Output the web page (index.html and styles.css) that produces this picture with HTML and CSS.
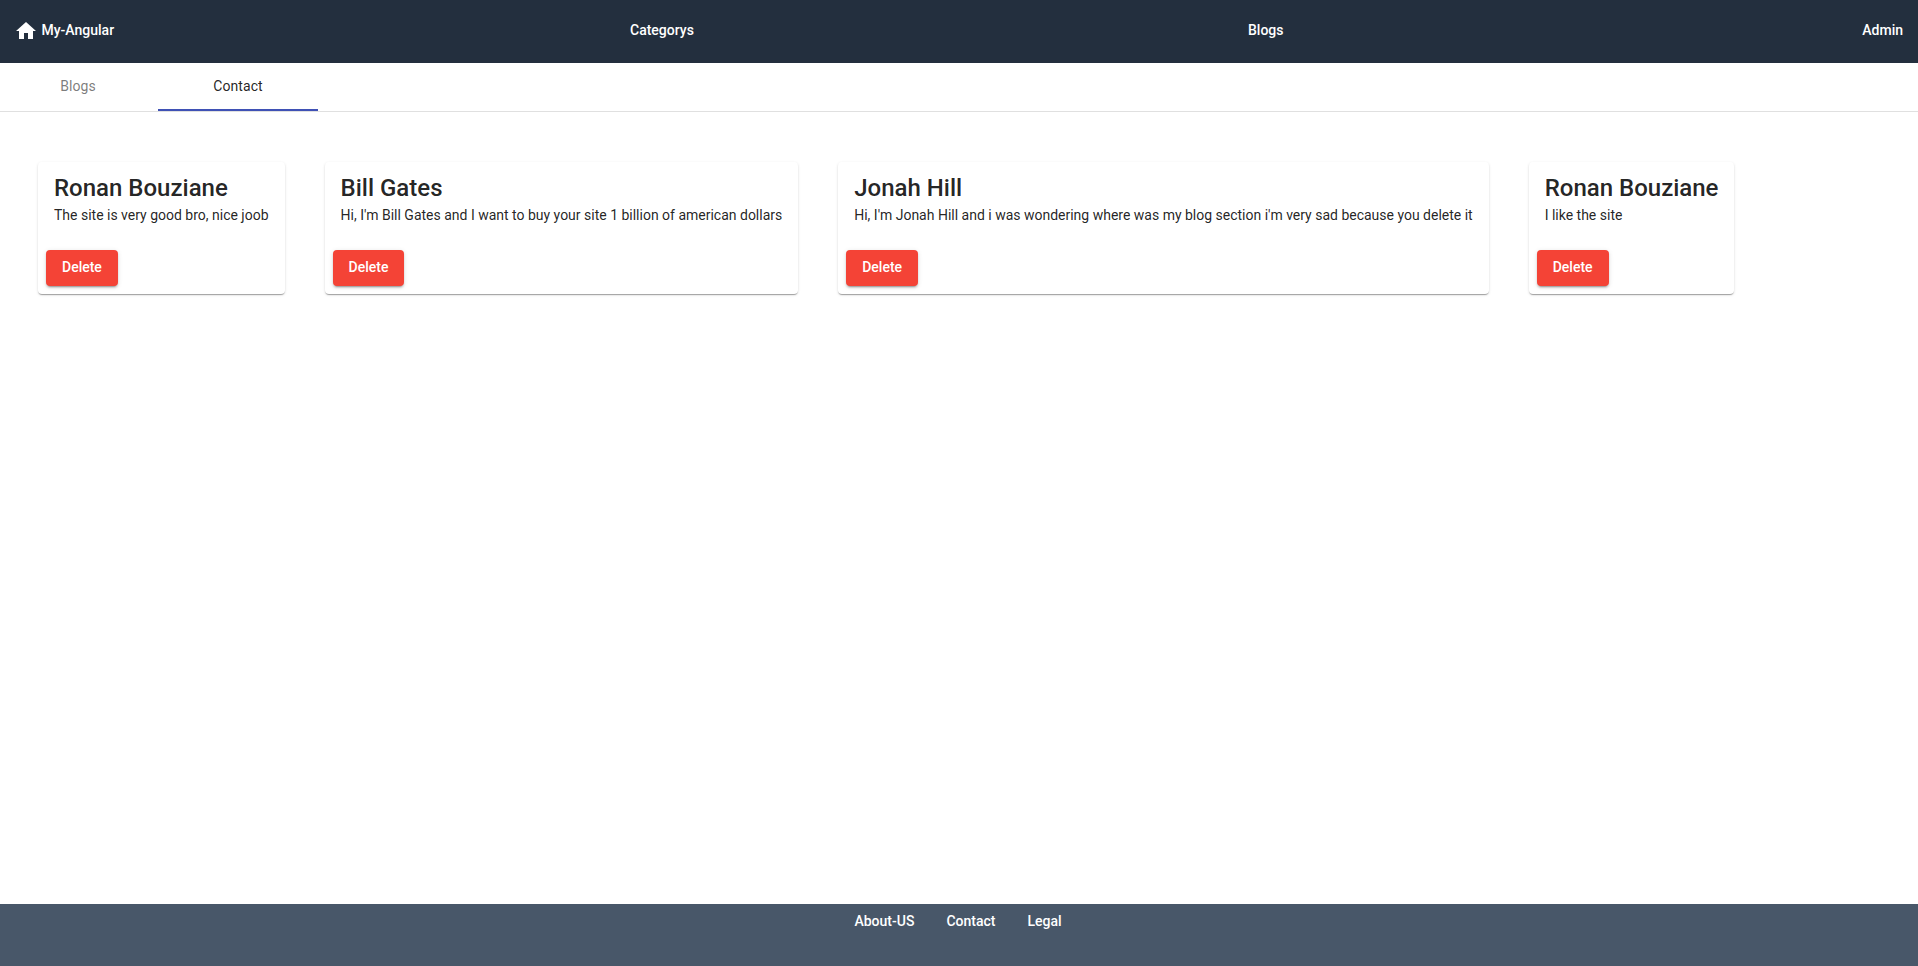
FILE: index.html
```html
<!DOCTYPE html>
<html lang="en">
<head>
<meta charset="utf-8">
<title>My-Angular</title>
<link rel="stylesheet" href="styles.css">
</head>
<body>
<header class="toolbar">
  <a class="brand"><svg class="home" viewBox="0 0 24 24"><path d="M10 20v-6h4v6h5v-8h3L12 3 2 12h3v8z"/></svg><span>My-Angular</span></a>
  <a>Categorys</a>
  <a>Blogs</a>
  <a class="account">Admin</a>
</header>
<nav class="tabs">
  <a class="tab">Blogs</a>
  <a class="tab active">Contact</a>
</nav>
<main class="cards">
  <article class="card"><h2>Ronan Bouziane</h2><p>The site is very good bro, nice joob</p><button class="delete">Delete</button></article>
  <article class="card"><h2>Bill Gates</h2><p>Hi, I'm Bill Gates and I want to buy your site 1 billion of american dollars</p><button class="delete">Delete</button></article>
  <article class="card"><h2>Jonah Hill</h2><p>Hi, I'm Jonah Hill and i was wondering where was my blog section i'm very sad because you delete it</p><button class="delete">Delete</button></article>
  <article class="card"><h2>Ronan Bouziane</h2><p>I like the site</p><button class="delete">Delete</button></article>
</main>
<footer class="footer">
  <a>About-US</a><a>Contact</a><a>Legal</a>
</footer>
</body>
</html>
```
FILE: styles.css
```css
* { box-sizing: border-box; }
body {
  margin: 0;
  height: 100vh;
  display: flex;
  flex-direction: column;
  font: 400 14px/20px Roboto, sans-serif;
  color: rgba(0, 0, 0, .87);
  background: #fff;
  overflow: hidden;
}
.toolbar {
  height: 63px;
  padding: 0 15px 3px 16px;
  display: grid;
  grid-template-columns: 614px 618px 1fr auto;
  align-items: center;
  background: #232f3e;
  color: #fff;
  font-weight: 500;
}
.brand { display: flex; align-items: center; gap: 3.5px; }
.home { width: 24px; height: 24px; margin: 2px 0 0 -2px; fill: currentColor; }
.tabs {
  height: 49px;
  display: flex;
  border-bottom: 1px solid rgba(0, 0, 0, .12);
}
.tab {
  width: 160px;
  height: 48px;
  line-height: 46px;
  text-align: center;
  letter-spacing: .06px;
  opacity: .6;
}
.tab:first-child { margin-left: -2px; }
.tab.active { opacity: 1; border-bottom: 2px solid #3f51b5; }
.cards {
  flex: 1;
  display: flex;
  align-items: flex-start;
  gap: 40px;
  padding: 50px 38px;
}
.card {
  height: 132px;
  padding: 16px;
  border-radius: 4px;
  box-shadow: 0 2px 1px -1px rgba(0,0,0,.2), 0 1px 1px 0 rgba(0,0,0,.14), 0 1px 3px 0 rgba(0,0,0,.12);
}
.card h2 { margin: -6px 0 0; font: 500 24px/32px Roboto, sans-serif; }
.card p { margin: 1px 0 25px; white-space: nowrap; letter-spacing: -.004px; }
.delete {
  display: block;
  height: 36px;
  margin-left: -8px;
  padding: 0 16px 2px;
  border: 0;
  border-radius: 4px;
  background: #f44336;
  color: #fff;
  font: 500 14px/34px Roboto, sans-serif;
  box-shadow: 0 3px 1px -2px rgba(0,0,0,.2), 0 2px 2px 0 rgba(0,0,0,.14), 0 1px 5px 0 rgba(0,0,0,.12);
}
.footer {
  height: 62px;
  padding: 7px 2px 0 0;
  display: flex;
  justify-content: center;
  gap: 32px;
  background: #485769;
  color: #fff;
  font-weight: 500;
}
```
